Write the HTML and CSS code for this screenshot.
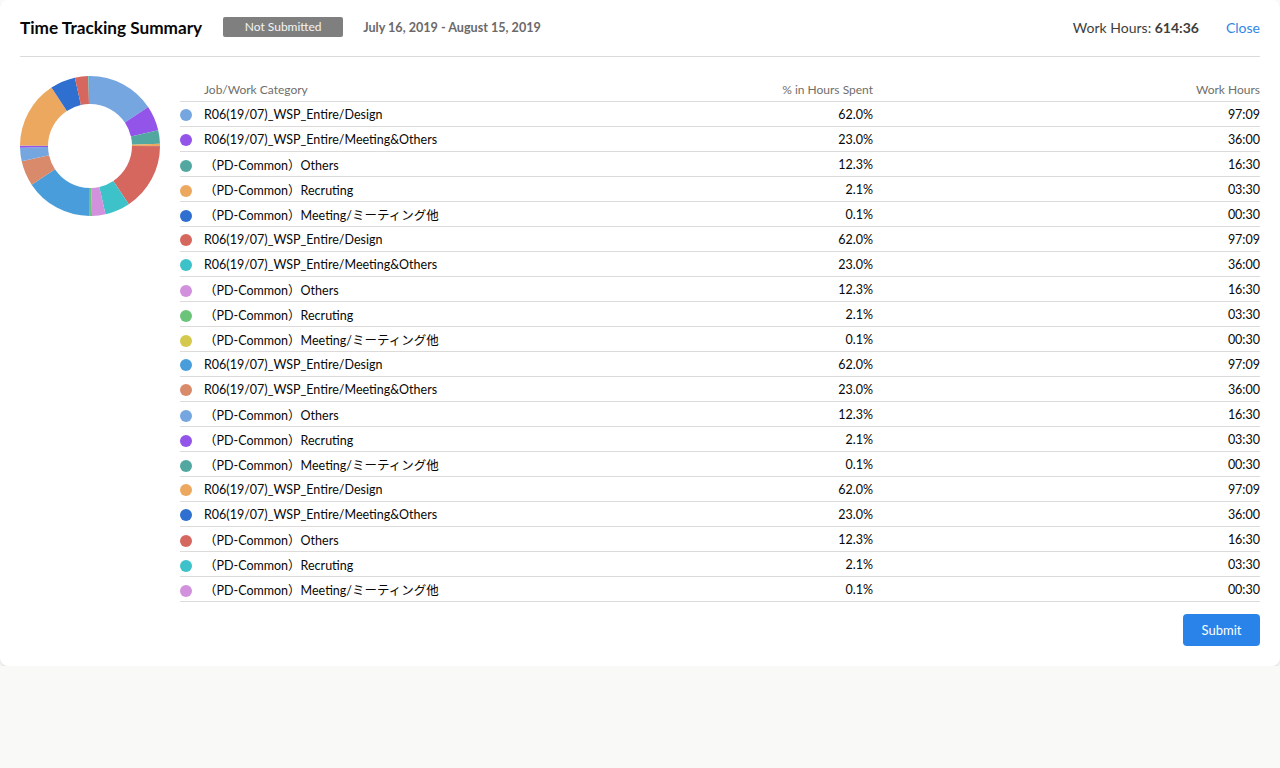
FILE: index.html
```html
<!DOCTYPE html>
<html lang="en">
<head>
<meta charset="utf-8">
<title>Time Tracking Summary</title>
<link rel="stylesheet" href="styles.css">
</head>
<body>
<div class="card">
  <header class="card-header">
    <h1 class="title">Time Tracking Summary</h1>
    <span class="badge">Not Submitted</span>
    <span class="period">July 16, 2019 - August 15, 2019</span>
    <span class="total">Work Hours: <b>614:36</b></span>
    <a class="close" href="#">Close</a>
  </header>
  <div class="card-body">
    <div class="chart">
      <svg width="140" height="140" viewBox="0 0 140 140">
        <g transform="rotate(-90 70 70)" fill="none" stroke-width="28">
          <circle class="s1" cx="70" cy="70" r="56" stroke-dasharray="54.81 400" stroke-dashoffset="0"/>
          <circle class="s2" cx="70" cy="70" r="56" stroke-dasharray="20.333 400" stroke-dashoffset="-54.81"/>
          <circle class="s3" cx="70" cy="70" r="56" stroke-dasharray="10.874 400" stroke-dashoffset="-75.143"/>
          <circle class="s4" cx="70" cy="70" r="56" stroke-dasharray="1.857 400" stroke-dashoffset="-86.017"/>
          <circle class="s5" cx="70" cy="70" r="56" stroke-dasharray="0.3 400" stroke-dashoffset="-87.874"/>
          <circle class="s6" cx="70" cy="70" r="56" stroke-dasharray="54.81 400" stroke-dashoffset="-87.965"/>
          <circle class="s7" cx="70" cy="70" r="56" stroke-dasharray="20.333 400" stroke-dashoffset="-142.775"/>
          <circle class="s8" cx="70" cy="70" r="56" stroke-dasharray="10.874 400" stroke-dashoffset="-163.108"/>
          <circle class="s9" cx="70" cy="70" r="56" stroke-dasharray="1.857 400" stroke-dashoffset="-173.982"/>
          <circle class="s10" cx="70" cy="70" r="56" stroke-dasharray="0.3 400" stroke-dashoffset="-175.839"/>
          <circle class="s11" cx="70" cy="70" r="56" stroke-dasharray="54.81 400" stroke-dashoffset="-175.929"/>
          <circle class="s12" cx="70" cy="70" r="56" stroke-dasharray="20.333 400" stroke-dashoffset="-230.739"/>
          <circle class="s13" cx="70" cy="70" r="56" stroke-dasharray="10.874 400" stroke-dashoffset="-251.072"/>
          <circle class="s14" cx="70" cy="70" r="56" stroke-dasharray="1.857 400" stroke-dashoffset="-261.946"/>
          <circle class="s15" cx="70" cy="70" r="56" stroke-dasharray="0.3 400" stroke-dashoffset="-263.803"/>
          <circle class="s16" cx="70" cy="70" r="56" stroke-dasharray="54.81 400" stroke-dashoffset="-263.894"/>
          <circle class="s17" cx="70" cy="70" r="56" stroke-dasharray="20.333 400" stroke-dashoffset="-318.704"/>
          <circle class="s18" cx="70" cy="70" r="56" stroke-dasharray="10.874 400" stroke-dashoffset="-339.037"/>
          <circle class="s19" cx="70" cy="70" r="56" stroke-dasharray="1.857 400" stroke-dashoffset="-349.911"/>
          <circle class="s20" cx="70" cy="70" r="56" stroke-dasharray="0.3 400" stroke-dashoffset="-351.6"/>
        </g>
      </svg>
    </div>
    <div class="table-wrap">
      <table class="summary">
        <colgroup>
          <col class="c-name">
          <col class="c-pct">
          <col class="c-hours">
        </colgroup>
        <thead>
          <tr><th class="name">Job/Work Category</th><th class="num">% in Hours Spent</th><th class="num">Work Hours</th></tr>
        </thead>
        <tbody>
          <tr><td class="name"><i class="dot d1"></i>R06(19/07)_WSP_Entire/Design</td><td class="num">62.0%</td><td class="num">97:09</td></tr>
          <tr><td class="name"><i class="dot d2"></i>R06(19/07)_WSP_Entire/Meeting&amp;Others</td><td class="num">23.0%</td><td class="num">36:00</td></tr>
          <tr><td class="name"><i class="dot d3"></i>（PD-Common）Others</td><td class="num">12.3%</td><td class="num">16:30</td></tr>
          <tr><td class="name"><i class="dot d4"></i>（PD-Common）Recruting</td><td class="num">2.1%</td><td class="num">03:30</td></tr>
          <tr><td class="name"><i class="dot d5"></i>（PD-Common）Meeting/ミーティング他</td><td class="num">0.1%</td><td class="num">00:30</td></tr>
          <tr><td class="name"><i class="dot d6"></i>R06(19/07)_WSP_Entire/Design</td><td class="num">62.0%</td><td class="num">97:09</td></tr>
          <tr><td class="name"><i class="dot d7"></i>R06(19/07)_WSP_Entire/Meeting&amp;Others</td><td class="num">23.0%</td><td class="num">36:00</td></tr>
          <tr><td class="name"><i class="dot d8"></i>（PD-Common）Others</td><td class="num">12.3%</td><td class="num">16:30</td></tr>
          <tr><td class="name"><i class="dot d9"></i>（PD-Common）Recruting</td><td class="num">2.1%</td><td class="num">03:30</td></tr>
          <tr><td class="name"><i class="dot d10"></i>（PD-Common）Meeting/ミーティング他</td><td class="num">0.1%</td><td class="num">00:30</td></tr>
          <tr><td class="name"><i class="dot d11"></i>R06(19/07)_WSP_Entire/Design</td><td class="num">62.0%</td><td class="num">97:09</td></tr>
          <tr><td class="name"><i class="dot d12"></i>R06(19/07)_WSP_Entire/Meeting&amp;Others</td><td class="num">23.0%</td><td class="num">36:00</td></tr>
          <tr><td class="name"><i class="dot d13"></i>（PD-Common）Others</td><td class="num">12.3%</td><td class="num">16:30</td></tr>
          <tr><td class="name"><i class="dot d14"></i>（PD-Common）Recruting</td><td class="num">2.1%</td><td class="num">03:30</td></tr>
          <tr><td class="name"><i class="dot d15"></i>（PD-Common）Meeting/ミーティング他</td><td class="num">0.1%</td><td class="num">00:30</td></tr>
          <tr><td class="name"><i class="dot d16"></i>R06(19/07)_WSP_Entire/Design</td><td class="num">62.0%</td><td class="num">97:09</td></tr>
          <tr><td class="name"><i class="dot d17"></i>R06(19/07)_WSP_Entire/Meeting&amp;Others</td><td class="num">23.0%</td><td class="num">36:00</td></tr>
          <tr><td class="name"><i class="dot d18"></i>（PD-Common）Others</td><td class="num">12.3%</td><td class="num">16:30</td></tr>
          <tr><td class="name"><i class="dot d19"></i>（PD-Common）Recruting</td><td class="num">2.1%</td><td class="num">03:30</td></tr>
          <tr><td class="name"><i class="dot d20"></i>（PD-Common）Meeting/ミーティング他</td><td class="num">0.1%</td><td class="num">00:30</td></tr>
        </tbody>
      </table>
      <div class="actions">
        <button class="submit" type="button">Submit</button>
      </div>
    </div>
  </div>
</div>
</body>
</html>
```

FILE: styles.css
```css
html, body {
  margin: 0;
  padding: 0;
}
body {
  background: #f9f9f8;
  font-family: Lato, "Noto Sans CJK JP", sans-serif;
  color: #080707;
  font-size: 13px;
}
.card {
  background: #fff;
  border-radius: 8px;
  box-shadow: 0 2px 3px rgba(0, 0, 0, 0.1);
  padding: 0 20px 20px;
}
.card-header {
  height: 54px;
  padding-bottom: 2px;
  display: flex;
  align-items: center;
  border-bottom: 1px solid #dddbda;
}
.title {
  margin: 0;
  font-size: 17.2px;
  font-weight: 700;
  color: #080707;
}
.badge {
  margin-left: 21px;
  width: 120px;
  height: 20px;
  line-height: 20px;
  text-align: center;
  background: #7f7f7f;
  color: #f4f4f4;
  font-size: 12px;
  border-radius: 2px;
}
.period {
  margin-left: 20px;
  font-size: 12.6px;
  font-weight: 700;
  color: #6b6969;
}
.total {
  margin-left: auto;
  font-size: 14px;
  color: #3e3e3c;
}
.total b {
  font-weight: 700;
}
.close {
  margin-left: 27px;
  font-size: 14px;
  color: #2f87e8;
  text-decoration: none;
}
.card-body {
  display: flex;
  gap: 20px;
  padding-top: 20px;
}
.chart {
  width: 140px;
  height: 140px;
  flex: none;
  margin-top: -1px;
}
.chart svg {
  display: block;
}
.table-wrap {
  flex: 1;
}
.summary {
  width: 100%;
  border-collapse: collapse;
  table-layout: fixed;
}
.c-name { width: 500px; }
.c-pct { width: 193px; }
.summary th,
.summary td {
  height: 24px;
  padding: 0;
  border-bottom: 1px solid #dddbda;
  white-space: nowrap;
  vertical-align: middle;
}
.summary th {
  font-size: 12px;
  font-weight: 400;
  color: #706e6b;
}
.summary th.name {
  text-align: left;
  padding-left: 24px;
}
.summary td {
  font-size: 12.5px;
}
.summary .num {
  text-align: right;
}
.dot {
  display: inline-block;
  width: 12px;
  height: 12px;
  border-radius: 50%;
  margin-right: 12px;
  vertical-align: -2px;
}
.actions {
  display: flex;
  justify-content: flex-end;
  padding-top: 12px;
}
.submit {
  width: 77px;
  height: 32px;
  border: none;
  border-radius: 4px;
  background: #2a83e8;
  color: #fff;
  font-family: Lato, sans-serif;
  font-size: 13px;
}

/* palette */
.d1, .d13 { background: #76a6e0; }
.d2, .d14 { background: #9254e9; }
.d3, .d15 { background: #52a8a0; }
.d4, .d16 { background: #eca85e; }
.d5, .d17 { background: #2e6fcf; }
.d6, .d18 { background: #d5675f; }
.d7, .d19 { background: #3cc2c8; }
.d8, .d20 { background: #d291dc; }
.d9 { background: #6cc47a; }
.d10 { background: #d4c94c; }
.d11 { background: #4a9ddb; }
.d12 { background: #d98a6a; }

.s1, .s13 { stroke: #76a6e0; }
.s2, .s14 { stroke: #9254e9; }
.s3, .s15 { stroke: #52a8a0; }
.s4, .s16 { stroke: #eca85e; }
.s5, .s17 { stroke: #2e6fcf; }
.s6, .s18 { stroke: #d5675f; }
.s7, .s19 { stroke: #3cc2c8; }
.s8, .s20 { stroke: #d291dc; }
.s9 { stroke: #6cc47a; }
.s10 { stroke: #d4c94c; }
.s11 { stroke: #4a9ddb; }
.s12 { stroke: #d98a6a; }
```
